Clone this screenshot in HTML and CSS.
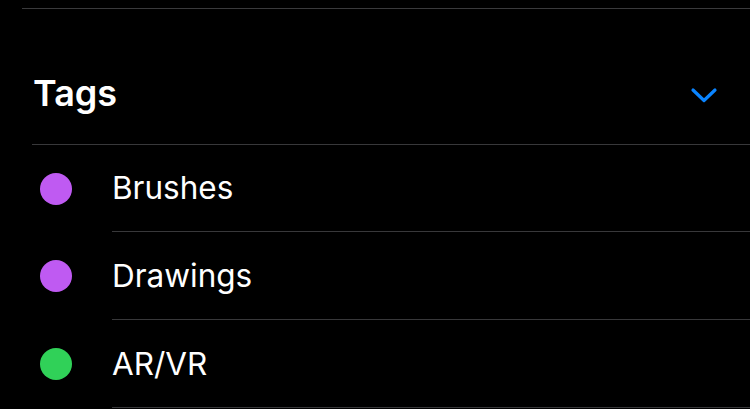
FILE: index.html
```html
<html>

<head>
  <title>Tags</title>
  <link rel="stylesheet" href="styles.css">
</head>

<body>
  <div class="top_rule"></div>
  <div class="section_header">
    <span class="section_title">Tags</span>
    <svg class="chevron" width="28" height="16" viewBox="0 0 28 16">
      <polyline points="3,3 14,13.5 25,3" fill="none" stroke="#0a84ff" stroke-width="3.2" stroke-linecap="round" stroke-linejoin="round" />
    </svg>
  </div>
  <div class="tag_list">
    <div class="tag_row first">
      <span class="dot purple"></span>
      <div class="tag_label">Brushes</div>
    </div>
    <div class="tag_row">
      <span class="dot purple"></span>
      <div class="tag_label">Drawings</div>
    </div>
    <div class="tag_row">
      <span class="dot green"></span>
      <div class="tag_label">AR/VR</div>
    </div>
  </div>
</body>

</html>
```

FILE: styles.css
```css
body {
  margin: 0;
  background-color: #000;
  color: #fff;
  font-family: Inter, "Noto Sans", sans-serif;
  overflow: hidden;
}

.top_rule {
  margin-top: 8px;
  margin-left: 22px;
  height: 1px;
  background-color: #3a3a3c;
}

.section_header {
  margin-left: 32px;
  padding-left: 1px;
  padding-top: 32px;
  height: 136px;
  box-sizing: border-box;
  border-bottom: 1px solid #38383a;
  display: flex;
  align-items: center;
  justify-content: space-between;
}

.section_title {
  font-size: 36px;
  font-weight: 600;
  line-height: 40px;
}

.chevron {
  margin-right: 32px;
  margin-top: 4px;
}

.tag_row {
  display: flex;
  align-items: center;
  height: 88px;
}

.tag_row.first {
  height: 87px;
}

.dot {
  width: 32px;
  height: 32px;
  border-radius: 50%;
  margin-left: 40px;
  flex-shrink: 0;
}

.purple {
  background-color: #bf5af2;
}

.green {
  background-color: #30d158;
}

.tag_label {
  flex: 1;
  margin-left: 40px;
  height: 100%;
  box-sizing: border-box;
  border-bottom: 1px solid #38383a;
  display: flex;
  align-items: center;
  font-size: 31.5px;
  line-height: 36px;
}
```
